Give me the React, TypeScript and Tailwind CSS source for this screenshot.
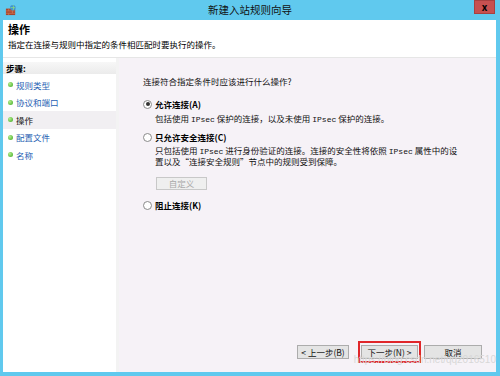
const font = "font-['Noto_Sans_CJK_SC','Noto_Sans',sans-serif]";

function Radio({ checked }: { checked?: boolean }) {
  return (
    <span className="flex h-[9px] w-[9px] items-center justify-center rounded-full border border-[#8a8a8a] bg-white">
      {checked && <span className="h-[4px] w-[4px] rounded-full bg-[#333]" />}
    </span>
  );
}

function Step({ label, active }: { label: string; active?: boolean }) {
  return (
    <div className={`flex h-[17.5px] items-center gap-[3px] pl-[5px] ${active ? "bg-[#f1eff2]" : ""}`}>
      <span className="h-[5px] w-[5px] rounded-full bg-[radial-gradient(circle_at_35%_35%,#b6ee8e,#3aa61d)]" />
      <span className={active ? "text-[#111]" : "text-[#1f5fb3]"}>{label}</span>
    </div>
  );
}

function Ip() {
  return <span className="font-['Liberation_Mono',monospace] text-[8px]">IPsec</span>;
}

function Btn({ children, w }: { children: React.ReactNode; w: string }) {
  return (
    <div className={`flex h-[14px] ${w} items-center justify-center border border-[#acacac] bg-[#e4e4e4] text-[8.5px] text-[#111]`}>
      {children}
    </div>
  );
}

export default function App() {
  return (
    <div className={`flex h-[376px] w-[500px] flex-col bg-[#60c9ee] text-[8.5px] leading-none text-[#111] ${font}`}>
      <div className="flex h-[20px] items-start">
        <div className="flex h-[20px] w-[50px] items-center pl-[5px]">
          <svg width="12" height="12" viewBox="0 0 13 13">
            <rect x="1" y="5" width="10" height="7" fill="#a5452d" />
            <path d="M1 7.5h10M1 10h10M4 5v2.5M8 7.5v2.5M4 10v2" stroke="#d27a5a" strokeWidth="0.8" />
            <circle cx="8.5" cy="4" r="3" fill="#3d8fd6" />
            <path d="M6 4h5M8.5 1.2c1.2 1.5 1.2 4 0 5.6" stroke="#8fe07a" strokeWidth="0.9" fill="none" />
          </svg>
        </div>
        <div className="flex h-[20px] flex-1 items-center justify-center text-[10.5px] text-[#111]">新建入站规则向导</div>
        <div className="flex w-[50px] justify-end pr-[5px]">
          <div className="flex h-[14px] w-[21px] items-center justify-center border border-[#a84040] bg-[#c75050] text-[10px] font-bold text-black">x</div>
        </div>
      </div>
      <div className="ml-[3px] mr-[4px] mb-[4px] flex flex-1 flex-col bg-white">
        <div className="flex h-[38px] flex-col border-b border-[#e6e6e6] pl-[5px]">
          <div className="mt-[3px] flex h-[12px] items-center text-[11px] font-bold text-black">操作</div>
          <div className="mt-[3px] flex h-[12px] items-center text-black">指定在连接与规则中指定的条件相匹配时要执行的操作。</div>
        </div>
        <div className="flex flex-1">
          <div className="flex w-[113px] flex-col pt-[4px]">
            <div className="flex h-[12px] items-center bg-[linear-gradient(#f7f7f7,#ebebeb)] pl-[3px] font-bold text-black">步骤:</div>
            <div className="mt-[2px] flex flex-col">
              <Step label="规则类型" />
              <Step label="协议和端口" />
              <Step label="操作" active />
              <Step label="配置文件" />
              <Step label="名称" />
            </div>
          </div>
          <div className="w-[3px] bg-[#f3f3f3]" />
          <div className="flex flex-1 flex-col bg-[#f6f2f7] pl-[24px] pr-[14px]">
            <div className="mt-[17px] flex h-[12px] items-center">连接符合指定条件时应该进行什么操作?</div>
            <div className="mt-[11px] flex h-[12px] items-center gap-[3px]">
              <Radio checked />
              <span className="font-bold text-black">允许连接(A)</span>
            </div>
            <div className="mt-[2px] h-[12px] pl-[12px] pt-[2px] leading-[9px]">
              包括使用 <Ip /> 保护的连接，以及未使用 <Ip /> 保护的连接。
            </div>
            <div className="mt-[7px] flex h-[12px] items-center gap-[3px]">
              <Radio />
              <span className="font-bold text-black">只允许安全连接(C)</span>
            </div>
            <div className="mt-[3px] pl-[12px] leading-[9.5px]">
              只包括使用 <Ip /> 进行身份验证的连接。连接的安全性将依照 <Ip /> 属性中的设
              <br />
              置以及“连接安全规则”节点中的规则受到保障。
            </div>
            <div className="mt-[11px] pl-[13px]">
              <div className="flex h-[13px] w-[51px] items-center justify-center border border-[#c8c8c8] bg-[#efefef] text-[#a8a8a8]">自定义</div>
            </div>
            <div className="mt-[9px] flex h-[12px] items-center gap-[3px]">
              <Radio />
              <span className="font-bold text-black">阻止连接(K)</span>
            </div>
            <div className="flex-1" />
            <div className="relative mb-[9px] flex items-center justify-end">
              <Btn w="w-[52px]">&lt; 上一步(B)</Btn>
              <div className="ml-[9px] mr-[3px] flex items-center border-2 border-[#e0262a] px-[1px] py-[2px]">
                <Btn w="w-[57px]">下一步(N) &gt;</Btn>
              </div>
              <Btn w="w-[58px]">取消</Btn>
              <div className="absolute right-[-14px] top-[14px] font-['Liberation_Sans',sans-serif] text-[10px] text-[#d8d8d8]">https://blog.csdn.net/qq2016510</div>
            </div>
          </div>
        </div>
      </div>
    </div>
  );
}
